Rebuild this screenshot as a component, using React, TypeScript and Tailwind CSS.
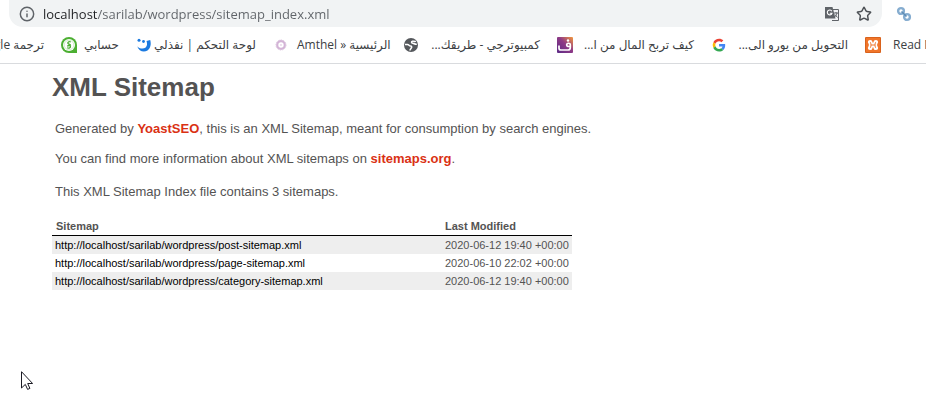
import React from "react";
import { Info, Star } from "lucide-react";

interface Bookmark {
  label: string;
  icon?: React.ReactNode;
  rtl?: boolean;
  box: string;
}

interface SitemapEntry {
  url: string;
  modified: string;
}

const SupportIcon = () => (
  <svg viewBox="0 0 16 16" className="size-4 shrink-0" aria-hidden="true">
    <path d="M8 0a8 8 0 1 0 0 16h8V8a8 8 0 0 0-8-8z" fill="#4caf32" />
    <circle cx="8" cy="8" r="6" fill="#fff" />
    <circle cx="8" cy="8" r="4.800" fill="none" stroke="#b5ddaa" strokeWidth=".6" />
    <path
      d="M9.800 5c-1.600-.7-3-.2-3 1 0 1.300 2.800.9 2.800 2.500M6.300 9.300c1.200-1.500 3.400-.7 3.200.6-.2 1.200-2.100 1.500-3.400.8"
      fill="none"
      stroke="#4caf32"
      strokeWidth="1.300"
    />
  </svg>
);

const SmileIcon = () => (
  <svg viewBox="0 0 16 16" className="size-4 shrink-0" aria-hidden="true">
    <circle cx="3" cy="3.200" r="1.500" fill="#1b7ae0" />
    <circle cx="7.500" cy="4.500" r="1.400" fill="#1b7ae0" />
    <path
      d="M1.200 9.200c1.800 2.300 6 3.300 8.500 1.200 1.700-1.500 1.600-4 .8-6.400l3.700-1c1.200 4 .4 8.200-2.700 10.400-3.700 2.500-8.700.8-10.300-4.200z"
      fill="#1b7ae0"
    />
  </svg>
);

const RingIcon = () => (
  <svg viewBox="0 0 16 16" className="size-4 shrink-0" aria-hidden="true">
    <circle cx="8" cy="8" r="3.800" fill="none" stroke="#d3b4d6" strokeWidth="2.200" />
    <circle
      cx="8"
      cy="8"
      r="5"
      fill="none"
      stroke="#dcc5df"
      strokeWidth="1"
      strokeDasharray="1.500 1"
    />
    <circle cx="8" cy="8" r=".8" fill="#d8bcdb" />
  </svg>
);

const GlobeIcon = () => (
  <svg viewBox="0 0 16 16" className="size-4 shrink-0" aria-hidden="true">
    <circle cx="8" cy="8" r="7" fill="#55585c" />
    <path
      d="M2 7.500h2.500c1.500 0 1.500 1.500 3 1.500 1.300 0 1.500 1 .8 2-.6.9-1.300 1-1.300 2.500M12.800 4.200c-1.200.8-2.300-.4-3.300 0-1.500.6-1.200 1.800.3 2.100 1.500.3 2 1.200 4 1"
      fill="none"
      stroke="#fff"
      strokeWidth="1.500"
    />
  </svg>
);

const FaIcon = () => (
  <svg viewBox="0 0 16 16" className="size-4 shrink-0" aria-hidden="true">
    <defs>
      <linearGradient id="fa" x1="0" y1="1" x2="1" y2="0">
        <stop offset="0" stopColor="#5b2a86" />
        <stop offset=".55" stopColor="#8f3a86" />
        <stop offset="1" stopColor="#f59a3c" />
      </linearGradient>
    </defs>
    <rect width="16" height="16" rx="1" fill="url(#fa)" />
    <path
      d="M2 8.500v2.800c0 1.200.8 1.700 2 1.700h7c1.600 0 2.300-.8 2.300-2.500V8c0-2.400-3.600-2.300-3.600 0 0 1.700 2 1.700 3.600 1.200"
      fill="none"
      stroke="#fff"
      strokeWidth="1.700"
    />
    <circle cx="11" cy="3.500" r="1.200" fill="#fff" />
  </svg>
);

const GoogleIcon = () => (
  <svg viewBox="0 0 48 48" className="size-4 shrink-0" aria-hidden="true">
    <g transform="translate(5 5) scale(.8)">
      <path fill="#EA4335" d="M24 9.500c3.540 0 6.710 1.220 9.210 3.600l6.850-6.850C35.900 2.380 30.470 0 24 0 14.620 0 6.510 5.380 2.560 13.220l7.980 6.190C12.430 13.720 17.740 9.500 24 9.500z" />
      <path fill="#4285F4" d="M46.980 24.550c0-1.570-.15-3.090-.38-4.550H24v9.020h12.940c-.58 2.960-2.260 5.480-4.780 7.180l7.730 6c4.510-4.180 7.090-10.360 7.090-17.650z" />
      <path fill="#FBBC05" d="M10.530 28.590a14.500 14.500 0 0 1 0-9.180l-7.980-6.190a24 24 0 0 0 0 21.560l7.980-6.190z" />
      <path fill="#34A853" d="M24 48c6.480 0 11.930-2.130 15.890-5.810l-7.730-6c-2.150 1.450-4.920 2.300-8.160 2.300-6.260 0-11.570-4.220-13.470-9.910l-7.980 6.190C6.510 42.620 14.620 48 24 48z" />
    </g>
  </svg>
);

const XamppIcon = () => (
  <svg viewBox="0 0 16 16" className="size-4 shrink-0" aria-hidden="true">
    <rect width="16" height="16" rx="1" fill="#d9621c" />
    <rect x="1" y="1" width="14" height="14" fill="#f0752a" />
    <path
      d="M5.200 3C3 3 2.300 5 3.300 6.300c.8 1 .8 2.400 0 3.400-1 1.300-.3 3.300 1.900 3.300 1.800 0 2.300-1.300 2.300-2.600h1c0 1.300.5 2.600 2.300 2.600 2.200 0 2.900-2 1.900-3.300-.8-1-.8-2.400 0-3.400C13.700 5 13 3 10.800 3 9 3 8.500 4.300 8.500 5.600h-1C7.500 4.300 7 3 5.200 3z"
      fill="#fff"
    />
    <path
      d="M5 5.300c.8 0 .8 1.500 1 2.700h4c.2-1.200.2-2.700 1-2.700M5 10.700c.8 0 .8-1.500 1-2.700M10 8c.2 1.200.2 2.700 1 2.700"
      fill="none"
      stroke="#f0752a"
      strokeWidth="1"
    />
  </svg>
);

const TranslateIcon = () => (
  <svg viewBox="0 0 16 16" className="size-4" aria-hidden="true">
    <path d="M1 1h7.500l3 11.500H1z" fill="#5f6368" />
    <path d="M9 3.500h5.500v11H8" fill="none" stroke="#5f6368" />
    <path
      d="M7.800 5.200a2.400 2.400 0 1 0 .2 2H5.800"
      fill="none"
      stroke="#fff"
      strokeWidth="1.100"
    />
    <path d="M10 7h4M12 6v1M13 7c-.3 2-1.500 3-2.500 4M11 8.500l2.500 3" fill="none" stroke="#5f6368" />
  </svg>
);

const ChainIcon = () => (
  <svg viewBox="0 0 16 16" className="size-4" aria-hidden="true">
    <g fill="none" stroke="#86add0" strokeWidth="2.400">
      <circle cx="5" cy="5" r="2.900" />
      <circle cx="11" cy="11" r="2.900" />
    </g>
    <path d="M5.500 5.500l5 5" stroke="#5d8cb5" strokeWidth="1.600" />
  </svg>
);

const bookmarks: Bookmark[] = [
  { label: "ترجمة Google", rtl: true, box: "w-11" },
  { label: "حسابي", icon: <SupportIcon />, rtl: true, box: "w-[42px]" },
  { label: "لوحة التحكم | نفذلي", icon: <SmileIcon />, rtl: true, box: "w-[104px]" },
  { label: "Amthel » الرئيسية", icon: <RingIcon />, box: "w-[97px] pl-2" },
  { label: "كمبيوترجي - طريقك...", icon: <GlobeIcon />, rtl: true, box: "w-[121px]" },
  { label: "كيف تربح المال من ا...", icon: <FaIcon />, rtl: true, box: "w-[121px]" },
  { label: "التحويل من يورو الى...", icon: <GoogleIcon />, rtl: true, box: "w-[121px]" },
  { label: "Read Me", icon: <XamppIcon />, box: "pl-3" },
];

const sitemaps: SitemapEntry[] = [
  {
    url: "http://localhost/sarilab/wordpress/post-sitemap.xml",
    modified: "2020-06-12 19:40 +00:00",
  },
  {
    url: "http://localhost/sarilab/wordpress/page-sitemap.xml",
    modified: "2020-06-10 22:02 +00:00",
  },
  {
    url: "http://localhost/sarilab/wordpress/category-sitemap.xml",
    modified: "2020-06-12 19:40 +00:00",
  },
];

const AddressBar = () => (
  <div className="flex items-start gap-3.5 pr-3.5">
    <div className="ml-[9px] flex h-[27px] flex-1 items-center rounded-b-[14px] bg-[#f1f3f4] px-2.5">
      <button type="button" aria-label="View site information">
        <Info className="size-4 text-[#5f6368]" strokeWidth={2.2} />
      </button>
      <input
        type="text"
        aria-label="Address"
        defaultValue="localhost/sarilab/wordpress/sitemap_index.xml"
        className="ml-2 min-w-0 flex-1 bg-[linear-gradient(to_right,#202124_54px,#5f6368_54px)] bg-clip-text text-[13px] leading-5 text-transparent outline-none"
      />
      <button type="button" aria-label="Translate this page" className="mr-4">
        <TranslateIcon />
      </button>
      <button type="button" aria-label="Bookmark this page">
        <Star className="size-4 text-[#4d5156]" strokeWidth={2.2} />
      </button>
    </div>
    <button type="button" aria-label="Link extension" className="mt-1.5">
      <ChainIcon />
    </button>
  </div>
);

const BookmarksBar = () => (
  <nav
    aria-label="Bookmarks"
    className="flex h-[37px] items-center gap-[17px] overflow-hidden border-b border-[#d9dbde] text-xs text-[#3c4043]"
  >
    {bookmarks.map(({ label, icon, rtl, box }) => (
      <a key={label} href="#" className="flex shrink-0 items-center">
        {icon}
        <span dir={rtl ? "rtl" : "ltr"} className={`whitespace-nowrap ${box}`}>
          {label}
        </span>
      </a>
    ))}
  </nav>
);

const App: React.FC = () => {
  return (
    <div className="bg-white font-['Open_Sans','Noto_Sans','DejaVu_Sans',sans-serif]">
      <header>
        <AddressBar />
        <BookmarksBar />
      </header>

      <main className="px-[52px] pt-[7px] font-['Liberation_Sans',Arial,sans-serif] text-[13px] leading-5 text-[#545353]">
        <h1 className="text-[26px] leading-8 font-bold">XML Sitemap</h1>

        <div className="mt-4 px-[3px]">
          <p className="mb-2.5">
            Generated by{" "}
            <a href="#" className="font-bold text-[#da3114]">
              YoastSEO
            </a>
            , this is an XML Sitemap, meant for consumption by search engines.
          </p>
          <p>
            You can find more information about XML sitemaps on{" "}
            <a href="#" className="font-bold text-[#da3114]">
              sitemaps.org
            </a>
            .
          </p>
          <p className="mt-[13px]">This XML Sitemap Index file contains 3 sitemaps.</p>
        </div>

        <table className="mt-[15px] w-full max-w-[520px] text-[11px] leading-[18px]">
          <thead>
            <tr className="border-b border-black text-left">
              <th className="w-3/4 px-1">Sitemap</th>
              <th className="px-[3px] whitespace-nowrap">Last Modified</th>
            </tr>
          </thead>
          <tbody>
            {sitemaps.map((entry) => (
              <tr key={entry.url} className="odd:bg-[#eeeeee]">
                <td className="px-[3px]">
                  <a href="#" className="text-black">
                    {entry.url}
                  </a>
                </td>
                <td className="px-[3px] whitespace-nowrap">{entry.modified}</td>
              </tr>
            ))}
          </tbody>
        </table>
      </main>

      <svg
        viewBox="0 0 12 19"
        className="pointer-events-none absolute top-[371px] left-[21px] h-[19px] w-3"
        aria-hidden="true"
      >
        <path
          d="M.5.700v16.300l3.800-3.600 2.300 5 2.300-1-2.200-4.900h4.900z"
          fill="#fff"
          stroke="#1a1a24"
        />
      </svg>
    </div>
  );
};

export default App;
